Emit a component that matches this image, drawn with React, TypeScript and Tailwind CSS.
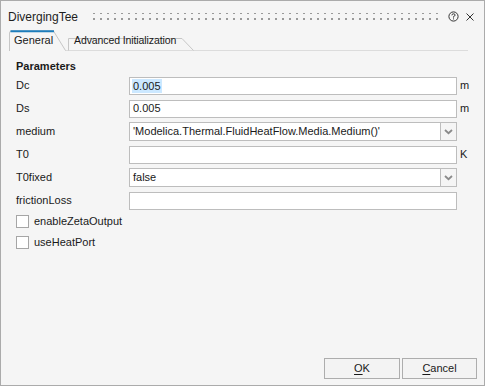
import React from "react";

const font = { fontFamily: '"Liberation Sans", Arial, sans-serif' };

function Grip() {
  return (
    <svg className="block w-full h-[9px]" height="9">
      <defs>
        <pattern id="dots" x="0" y="0" width="7" height="6" patternUnits="userSpaceOnUse">
          <rect x="0" y="0" width="2" height="2" fill="#9a9a9a" />
        </pattern>
      </defs>
      <rect x="0" y="1" width="100%" height="8" fill="url(#dots)" />
    </svg>
  );
}

function Chevron() {
  return (
    <svg width="9" height="6" viewBox="0 0 9 6">
      <path d="M1 1 L4.5 4.2 L8 1" fill="none" stroke="#8a8a8a" strokeWidth="1.8" />
    </svg>
  );
}

function TextRow({ label, value, unit, selected }: { label: string; value?: string; unit?: string; selected?: boolean }) {
  return (
    <div className="grid grid-cols-[113px_328px_auto] items-center h-[23px]">
      <span className="text-[11px] text-[#1a1a1a]">{label}</span>
      <div className="h-[18px] bg-white border border-[#bdbdbd] flex items-center pl-[2px] text-[11px] text-[#1a1a1a]">
        {value ? (
          <span className={selected ? "bg-[#cce8ff] leading-[14px] px-[1px]" : "px-[1px]"}>{value}</span>
        ) : null}
      </div>
      <span className="pl-[3px] text-[11px] text-[#1a1a1a]">{unit}</span>
    </div>
  );
}

function ComboRow({ label, value }: { label: string; value: string }) {
  return (
    <div className="grid grid-cols-[113px_328px_auto] items-center h-[23px]">
      <span className="text-[11px] text-[#1a1a1a]">{label}</span>
      <div className="h-[19px] flex">
        <div className="flex-1 bg-white border border-[#bdbdbd] flex items-center pl-[3px] text-[11px] text-[#1a1a1a]">
          {value}
        </div>
        <div className="w-[16px] border border-l-0 border-[#bdbdbd] bg-[#f5f5f5] flex items-center justify-center">
          <Chevron />
        </div>
      </div>
      <span />
    </div>
  );
}

function CheckRow({ label }: { label: string }) {
  return (
    <div className="flex items-center h-[21px]">
      <div className="w-[13px] h-[13px] bg-white border border-[#a6a6a6]" />
      <span className="ml-[5px] text-[11px] text-[#1a1a1a]">{label}</span>
    </div>
  );
}

export default function App() {
  return (
    <div
      className="w-[485px] h-[386px] border border-[#ababab] bg-[#f5f5f5] flex flex-col"
      style={font}
    >
      {/* title bar */}
      <div className="h-[29px] flex items-center pl-[7px] pr-[9px]">
        <span className="text-[12px] text-[#1e1e1e] mt-[3px]">DivergingTee</span>
        <div className="flex-1 ml-[15px] mr-[10px] mt-[1px]">
          <Grip />
        </div>
        <svg width="11" height="11" viewBox="0 0 11 11" className="mt-[2px]">
          <circle cx="5.5" cy="5.5" r="4.6" fill="none" stroke="#333" strokeWidth="1" />
          <path d="M3.9 4.3 Q3.9 2.8 5.5 2.8 Q7.1 2.8 7.1 4.1 Q7.1 5 5.5 5.6 L5.5 6.6" fill="none" stroke="#333" strokeWidth="1" />
          <rect x="5" y="7.4" width="1" height="1" fill="#333" />
        </svg>
        <svg width="10" height="10" viewBox="0 0 10 10" className="ml-[6px] mt-[2px]">
          <path d="M1.5 1.5 L8.5 8.5 M8.5 1.5 L1.5 8.5" stroke="#333" strokeWidth="1" />
        </svg>
      </div>

      {/* tabs */}
      <div className="relative ml-[8px] w-[459px] h-[21px] flex items-end">
        <svg className="absolute inset-0" width="459" height="21">
          <path d="M56 20.5 L459 20.5" stroke="#dcdcdc" strokeWidth="1" />
          <path d="M59.5 20.5 L59.5 8.5 L173 8.5 L184.5 20.5" fill="none" stroke="#c6c6c6" strokeWidth="1" />
          <path d="M0.5 21 L0.5 3 Q0.5 1 2.5 1 L44.5 1 L56.5 20.5" fill="#f5f5f5" stroke="#c6c6c6" strokeWidth="1" />
          <path d="M1.5 1.2 L45 1.2" stroke="#1c7dbb" strokeWidth="2" />
        </svg>
        <span className="relative w-[60px] pl-[5px] text-[11px] text-[#1a1a1a] leading-[13px] mb-[4px]">General</span>
        <span className="relative pl-[5px] text-[10.5px] tracking-[-0.1px] text-[#1a1a1a] leading-[13px] mb-[4px]">Advanced Initialization</span>
      </div>

      {/* content */}
      <div className="flex-1 flex flex-col pl-[15px] pt-[9px]">
        <div className="text-[11px] font-bold text-[#1a1a1a] leading-[13px] h-[13px]">Parameters</div>
        <div className="flex flex-col mt-[1px]">
          <TextRow label="Dc" value="0.005" unit="m" selected />
          <TextRow label="Ds" value="0.005" unit="m" />
          <ComboRow label="medium" value="'Modelica.Thermal.FluidHeatFlow.Media.Medium()'" />
          <TextRow label="T0" unit="K" />
          <ComboRow label="T0fixed" value="false" />
          <TextRow label="frictionLoss" />
          <div className="-mt-px">
            <CheckRow label="enableZetaOutput" />
            <CheckRow label="useHeatPort" />
          </div>
        </div>
      </div>

      {/* footer */}
      <div className="flex justify-end gap-[2px] pr-[7px] pb-[6px]">
        <button className="w-[76px] h-[21px] border border-[#adadad] bg-[#f3f3f3] text-[11px] text-[#1a1a1a]">
          <span className="underline underline-offset-2">O</span>K
        </button>
        <button className="w-[75px] h-[21px] border border-[#adadad] bg-[#f3f3f3] text-[11px] text-[#1a1a1a]">
          <span className="underline underline-offset-2">C</span>ancel
        </button>
      </div>
    </div>
  );
}
